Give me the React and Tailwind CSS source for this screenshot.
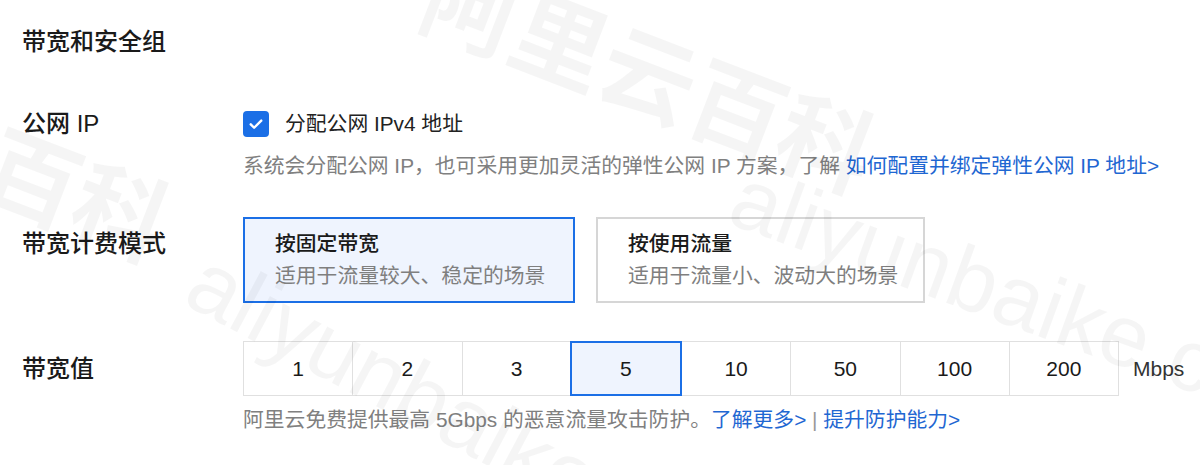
import React from "react";

const FONT = { fontFamily: '"Liberation Sans", "Noto Sans CJK SC", sans-serif' };
const BANDWIDTHS = [1, 2, 3, 5, 10, 50, 100, 200];

function Check() {
    return (
        <span className="flex h-[26px] w-[26px] items-center justify-center rounded-[4px] bg-[#1b6fe6]">
            <svg viewBox="0 0 24 24" className="h-[18px] w-[18px]" fill="none" stroke="white" strokeWidth={3.2} strokeLinecap="round" strokeLinejoin="round">
                <path d="M5 12.5l4.5 4.5L19 7.5" />
            </svg>
        </span>
    );
}

function ModeCard({ title, desc, active }) {
    return (
        <div className={`flex h-[86px] flex-col whitespace-nowrap pl-[30px] pt-[12px] ${active ? "w-[332px] border-2 border-[#1b6fe6] bg-[#eff4fe]" : "w-[329px] border-2 border-[#d6d6d6] bg-white"}`}>
            <span className="text-[20.8px] font-medium leading-[26px] text-[#1a1a1a]">{title}</span>
            <span className="mt-[6px] text-[20.8px] leading-[26px] text-[#7f7f7f]">{desc}</span>
        </div>
    );
}

// faint diagonal site watermark over the page
function Watermark() {
    return (
        <div className="pointer-events-none absolute inset-0 overflow-hidden select-none text-black/[0.04]">
            <span className="absolute left-[426px] top-[-54px] origin-left rotate-[21deg] whitespace-nowrap text-[95px] font-bold leading-none">阿里云百科</span>
            <span className="absolute left-[-279px] top-[15px] origin-left rotate-[21deg] whitespace-nowrap text-[95px] font-bold leading-none">阿里云百科</span>
            <span className="absolute left-[735px] top-[150px] origin-left rotate-[20deg] whitespace-nowrap text-[88px] leading-none">aliyunbaike.com</span>
            <span className="absolute left-[195px] top-[230px] origin-left rotate-[28deg] whitespace-nowrap text-[90px] leading-none">aliyunbaike.com</span>
        </div>
    );
}

export default function App() {
    return (
        <div className="relative h-[465px] w-[1200px] overflow-hidden bg-white" style={FONT}>
            <div className="pl-[22px] pt-[28px]">
                <h2 className="text-[24px] font-medium leading-[28px] text-[#1a1a1a]">带宽和安全组</h2>

                {/* Public IP */}
                <div className="mt-[55px] flex">
                    <div className="w-[221px] text-[24px] font-medium leading-[26px] text-[#1a1a1a]">公网 IP</div>
                    <div className="flex flex-col">
                        <label className="flex h-[26px] items-center gap-[16px]">
                            <Check />
                            <span className="text-[20.8px] leading-[26px] text-[#222]">分配公网 IPv4 地址</span>
                        </label>
                        <p className="mt-[16px] whitespace-nowrap text-[20.8px] leading-[26px] text-[#808080]">
                            系统会分配公网 IP，也可采用更加灵活的弹性公网 IP 方案，了解 <span className="text-[#1f67d2]">如何配置并绑定弹性公网 IP 地址&gt;</span>
                        </p>
                    </div>
                </div>

                {/* Billing mode */}
                <div className="mt-[38px] flex">
                    <div className="w-[221px] pt-[14px] text-[24px] font-medium leading-[26px] text-[#1a1a1a]">带宽计费模式</div>
                    <div className="flex gap-[21px]">
                        <ModeCard title="按固定带宽" desc="适用于流量较大、稳定的场景" active />
                        <ModeCard title="按使用流量" desc="适用于流量小、波动大的场景" />
                    </div>
                </div>

                {/* Bandwidth value */}
                <div className="mt-[38px] flex">
                    <div className="w-[221px] text-[24px] font-medium leading-[55px] text-[#1a1a1a]">带宽值</div>
                    <div className="flex flex-col">
                        <div className="flex items-center">
                            <div className="flex h-[55px] w-[876px] border border-[#e0e0e0]">
                                {BANDWIDTHS.map((b, i) => (
                                    <div
                                        key={b}
                                        className={`flex flex-1 items-center justify-center text-[21px] text-[#1a1a1a] ${b === 5 ? "-my-px -ml-px border-2 border-[#1b6fe6] bg-[#eff4fe]" : i > 0 && BANDWIDTHS[i - 1] !== 5 ? "border-l border-[#e0e0e0]" : ""}`}
                                    >
                                        {b}
                                    </div>
                                ))}
                            </div>
                            <span className="ml-[14px] text-[21px] text-[#333]">Mbps</span>
                        </div>
                        <p className="mt-[11px] whitespace-nowrap text-[20.8px] leading-[26px] text-[#808080]">
                            阿里云免费提供最高 5Gbps 的恶意流量攻击防护。<span className="text-[#1f67d2]">了解更多&gt;</span> <span className="text-[#999]">|</span> <span className="text-[#1f67d2]">提升防护能力&gt;</span>
                        </p>
                    </div>
                </div>
            </div>
            <Watermark />
        </div>
    );
}
